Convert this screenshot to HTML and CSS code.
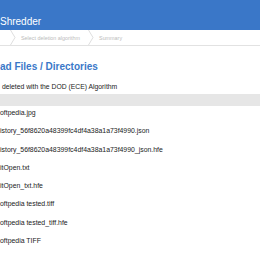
FILE: index.html
```html
<!DOCTYPE html>
<html lang="en">
<head>
    <meta charset="UTF-8">
    <title>Shredder</title>
    <link rel="stylesheet" href="styles.css">
</head>
<body>

<div class="app">
    <div class="header">
        <span class="app-title">Shredder</span>
    </div>

    <!-- wizard steps -->
    <div class="steps">
        <div class="step-first"></div>
        <svg class="chevron" width="6" height="15" viewBox="0 0 6 15"><path d="M0.5 0 L5 7.5 L0.5 15" fill="none" stroke="#d6d6d6" stroke-width="0.8"/></svg>
        <div class="step">Select deletion algorithm</div>
        <svg class="chevron" width="6" height="15" viewBox="0 0 6 15"><path d="M0.5 0 L5 7.5 L0.5 15" fill="none" stroke="#d6d6d6" stroke-width="0.8"/></svg>
        <div class="step">Summary</div>
    </div>

    <div class="content">
        <h2 class="page-title">ad Files / Directories</h2>
        <p class="subtitle">deleted with the DOD (ECE) Algorithm</p>

        <div class="list-head"></div>
        <ul class="file-list">
            <li>oftpedia.jpg</li>
            <li>istory_56f8620a48399fc4df4a38a1a73f4990.json</li>
            <li>istory_56f8620a48399fc4df4a38a1a73f4990_json.hfe</li>
            <li>itOpen.txt</li>
            <li>itOpen_txt.hfe</li>
            <li>oftpedia tested.tiff</li>
            <li>oftpedia tested_tiff.hfe</li>
            <li>oftpedia TIFF</li>
        </ul>
    </div>
</div>

</body>
</html>
```

FILE: styles.css
```css
html, body {
    margin: 0;
    padding: 0;
    background: #ffffff;
    font-family: "Liberation Sans", Arial, sans-serif;
}
.app {
    width: 260px;
    height: 257px;
    overflow: hidden;
}
/* blue title bar */
.header {
    height: 30px;
    background-color: #3a77c8;
    display: flex;
    align-items: flex-end;
    padding: 0 0 2px 0;
    box-sizing: border-box;
}
.app-title {
    color: #ffffff;
    font-size: 10px;
    line-height: 12px;
}
/* steps */
.steps {
    height: 16px;
    border-bottom: 1px solid #e2e2e2;
    box-sizing: border-box;
    display: flex;
    align-items: center;
    font-size: 5.4px;
    color: #bcbcbc;
}
.step-first {
    width: 10px;
}
.step {
    padding: 0 8px 0 5px;
}
.chevron {
    display: block;
}
.content {
    padding-top: 15px;
}
.page-title {
    margin: 0;
    font-size: 10px;
    line-height: 12px;
    font-weight: bold;
    color: #3a78c8;
}
.subtitle {
    margin: 10px 0 0 2px;
    font-size: 6.8px;
    line-height: 8px;
    color: #222;
}
.list-head {
    margin-top: 3px;
    height: 12px;
    background-color: #e6e6e6;
}
.file-list {
    list-style: none;
    margin: 0;
    padding: 1px 0 0 0;
}
.file-list li {
    height: 18.3px;
    line-height: 12px;
    font-size: 6.9px;
    color: #222;
    white-space: nowrap;
}
```
